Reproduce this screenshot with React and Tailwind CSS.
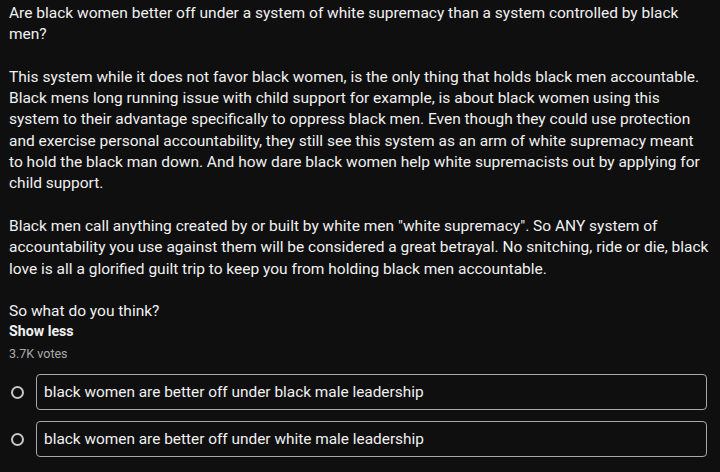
import { useState } from "react";

const paragraphs = [
    "Are black women better off under a system of white supremacy than a system controlled by black men?",
    "This system while it does not favor black women, is the only thing that holds black men accountable. Black mens long running issue with child support for example, is about black women using this system to their advantage specifically to oppress black men. Even though they could use protection and exercise personal accountability, they still see this system as an arm of white supremacy meant to hold the black man down. And how dare black women help white supremacists out by applying for child support.",
    'Black men call anything created by or built by white men "white supremacy". So ANY system of accountability you use against them will be considered a great betrayal. No snitching, ride or die, black love is all a glorified guilt trip to keep you from holding black men accountable.',
    "So what do you think?",
];

const options = [
    "black women are better off under black male leadership",
    "black women are better off under white male leadership",
];

function App() {
    const [selected, setSelected] = useState(null);

    return (
        <div
            className="min-h-screen bg-[#0f0f0f] text-[#f1f1f1] pl-[9px] pr-[11px] pt-[3px]"
            style={{ fontFamily: "Roboto, 'Liberation Sans', sans-serif" }}
        >
            <div className="text-[15.5px] leading-[21.3px]">
                {paragraphs.map((p, i) => (
                    <p key={i} className={i < paragraphs.length - 1 ? "mb-[21.3px]" : ""}>
                        {p}
                    </p>
                ))}
            </div>
            <button className="block text-[14.2px] font-bold leading-[18px]">Show less</button>
            <div className="text-[12.5px] text-[#aaaaaa] leading-[18px] mt-[5px]">3.7K votes</div>

            <div className="mt-[11px] flex flex-col gap-[11px] pr-[2px]">
                {options.map((opt, i) => (
                    <div key={i} className="flex items-center" onClick={() => setSelected(i)}>
                        <div className="w-[27px] flex justify-start pl-[2px]">
                            <div className="w-[13px] h-[13px] rounded-full border-2 border-[#c8c8c8]"></div>
                        </div>
                        <div
                            className={`flex-1 h-[36px] flex items-center px-[7px] rounded-[4px] border ${
                                selected === i ? "border-white" : "border-[#a8a8a8]"
                            } text-[15.4px]`}
                        >
                            {opt}
                        </div>
                    </div>
                ))}
            </div>
        </div>
    );
}

export default App;
